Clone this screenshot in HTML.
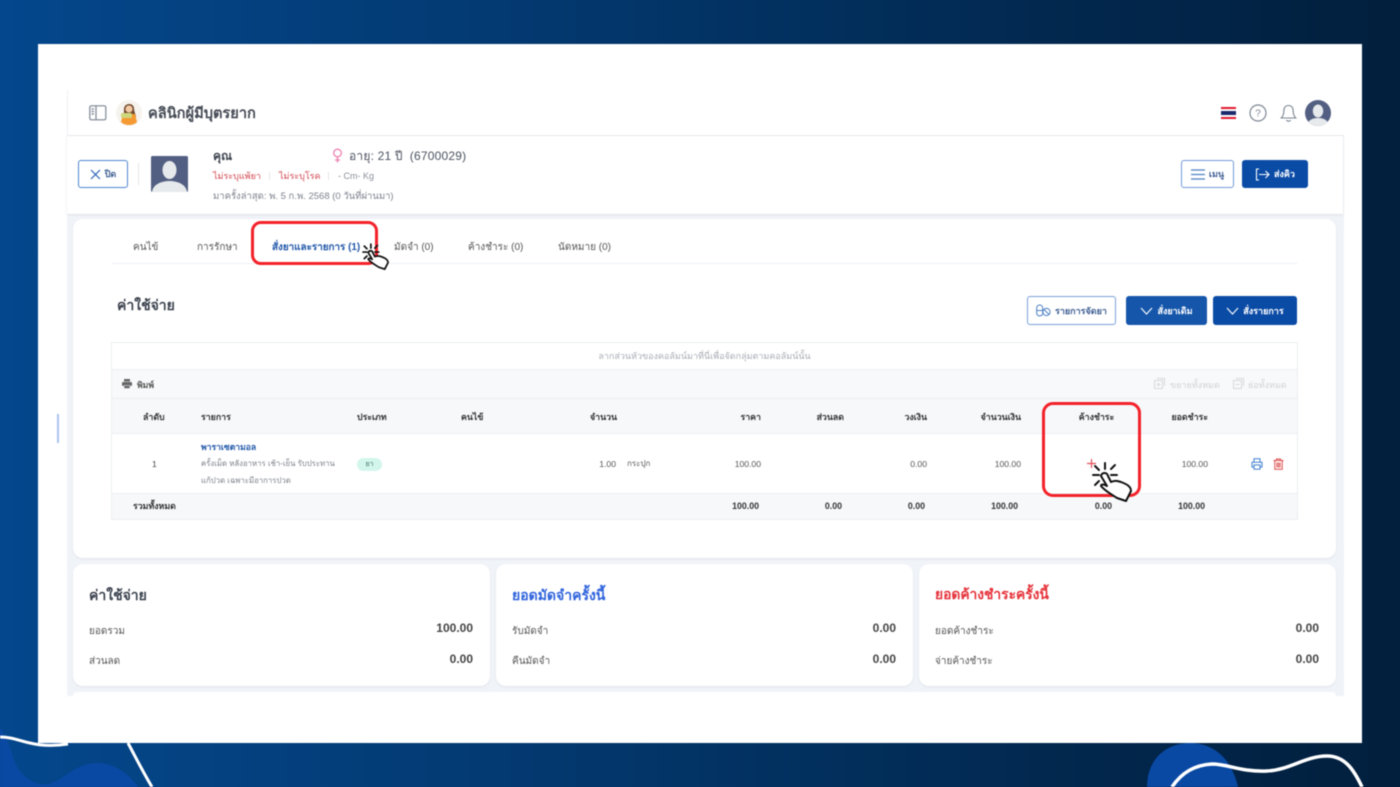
<!DOCTYPE html>
<html lang="th"><head><meta charset="utf-8"><title>คลินิกผู้มีบุตรยาก</title>
<style>
*{box-sizing:border-box}
html,body{margin:0;padding:0}
body{width:1400px;height:787px;overflow:hidden;position:relative;background:linear-gradient(90deg,#04478c 0%,#033a72 35%,#02284f 75%,#021f3d 100%);font-family:"Liberation Sans","Noto Sans CJK SC",sans-serif;color:#3c4350}
#w{position:absolute;left:0;top:0;width:1400px;height:787px;filter:blur(.4px)}
.a{position:absolute;white-space:nowrap}
.r{text-align:right}.c{text-align:center}
.th{font-size:8.8px;font-weight:700;color:#333;line-height:12px}
.tab{font-size:10px;line-height:12px;color:#555}
.td{font-size:8.6px;color:#555;line-height:12px}
.tf{font-size:8.8px;font-weight:700;color:#333;line-height:12px}
.lb{font-size:10px;line-height:14px;color:#555}
.card{position:absolute;background:#fff;border-radius:10px;box-shadow:0 1px 2px #dfe3ea}
.btn{position:absolute;border-radius:3px;font-size:9px;font-weight:700;display:flex;align-items:center;justify-content:center;gap:4px}
.pri{background:#0a4ba6;color:#fff}
.out{background:#fff;border:1px solid #6f9ad6;color:#3f5f94}
</style></head><body><div id="w">
<svg class="a" style="left:0;top:0" width="1400" height="787" viewBox="0 0 1400 787">
<path d="M0 727C5 735 10 745 13 757C18 775 35 787 48 784C65 780 75 763 97 763C115 763 130 775 138 787H0Z" fill="#0a49a3"/>
<path d="M1147 787C1147 760 1165 743 1190 743C1215 743 1232 760 1238 787Z" fill="#0a49a3"/>
</svg>
<div class="a" style="left:38px;top:44px;width:1324px;height:699px;background:#fff"></div>
<svg class="a" style="left:0;top:0" width="1400" height="787" viewBox="0 0 1400 787">
<path d="M0 737C12 737 20 741 30 743C42 746 55 746 68 744" fill="none" stroke="#fff" stroke-width="3"/>
<path d="M128 743C136 758 143 772 152 787" fill="none" stroke="#fff" stroke-width="3"/>
<path d="M1172 787C1182 772 1195 765 1212 764C1228 764 1240 772 1267 771C1290 770 1305 756 1327 756C1345 756 1354 770 1362 787" fill="none" stroke="#fff" stroke-width="3.5"/>
</svg>
<div class="a" style="left:57px;top:414px;width:2px;height:29px;background:#a9c4ee"></div>

<!-- app area -->
<div class="a" style="left:67px;top:90px;width:1277px;height:606px;background:#f0f3f8"></div>
<div class="a" style="left:67px;top:90px;width:1277px;height:46px;background:#fff;border-bottom:1px solid #e6e8ec;border-left:1px solid #eef0f4"></div>
<div class="a" style="left:67px;top:136px;width:1276px;height:78px;background:#fff;box-shadow:0 1px 2px #dcdfe5"></div>

<!-- top bar -->
<svg class="a" style="left:89px;top:105px" width="18" height="16" viewBox="0 0 18 16" fill="none" stroke="#7d8794" stroke-width="1.2"><rect x=".8" y=".8" width="16" height="14" rx="1.5"/><path d="M7 1V15M2.5 4H5M2.5 6.5H5M2.5 9H5"/></svg>
<svg class="a" style="left:116px;top:100px" width="26" height="26" viewBox="0 0 26 26"><circle cx="13" cy="13" r="13" fill="#f6f3ee"/><path d="M8 9C8 3 17 2 18 8C18 12 20 15 20 17H7C8 14 8 12 8 9Z" fill="#70482c"/><circle cx="13" cy="9" r="3.6" fill="#f3c9a5"/><path d="M7 14H19L21 22C17 26 9 26 5 22Z" fill="#f59a32"/><rect x="5" y="13" width="11" height="5" rx="1.5" fill="#cfd77c"/></svg>
<div class="a" style="left:148px;top:105px;font-size:14.6px;font-weight:700;line-height:18px;color:#454b55">คลินิกผู้มีบุตรยาก</div>
<svg class="a" style="left:1221px;top:107px" width="15" height="12"><rect width="15" height="12" fill="#fff"/><rect width="15" height="2" fill="#e01b2f"/><rect y="10" width="15" height="2" fill="#e01b2f"/><rect y="4" width="15" height="4" fill="#1b2a6b"/></svg>
<svg class="a" style="left:1249px;top:104px" width="18" height="18" viewBox="0 0 18 18" fill="none" stroke="#7d8794" stroke-width="1.2"><circle cx="9" cy="9" r="8"/><text x="9" y="12.6" font-size="10" fill="#7d8794" stroke="none" text-anchor="middle" font-family="Liberation Sans">?</text></svg>
<svg class="a" style="left:1280px;top:104px" width="17" height="19" viewBox="0 0 17 19" fill="none" stroke="#7d8794" stroke-width="1.1"><path d="M8.5 1.5C5 1.5 3.8 4 3.8 7.5C3.8 11 2.6 12.5 1.2 14H15.8C14.4 12.5 13.2 11 13.2 7.5C13.2 4 12 1.5 8.5 1.5Z"/><path d="M6.5 16C7 17.6 10 17.6 10.5 16"/></svg>
<svg class="a" style="left:1305px;top:100px" width="26" height="26" viewBox="0 0 26 26"><defs><clipPath id="cav"><circle cx="13" cy="13" r="13"/></clipPath></defs><g clip-path="url(#cav)"><rect width="26" height="26" fill="#525f82"/><ellipse cx="13" cy="11" rx="5.2" ry="6.5" fill="#e7eaec"/><path d="M2 26C3 19 9 18 13 18C17 18 23 19 24 26Z" fill="#e7eaec"/></g></svg>

<!-- patient -->
<div class="btn" style="left:78px;top:160px;width:50px;height:28px;background:#fff;border:1px solid #4d86cf;color:#3f5f94;font-size:9px"><svg width="11" height="11" viewBox="0 0 11 11" stroke="#2c64b8" stroke-width="1.2"><path d="M1 1L10 10M10 1L1 10"/></svg>ปิด</div>
<div class="a" style="left:138px;top:163px;width:1px;height:22px;background:#e4e6ea"></div>
<svg class="a" style="left:151px;top:156px" width="37" height="36" viewBox="0 0 37 36"><rect width="37" height="36" rx="1.5" fill="#525f82"/><ellipse cx="18.5" cy="14" rx="7" ry="9" fill="#e7eaec"/><path d="M1 36C2 28 11 25 18.5 25C26 25 35 28 36 36Z" fill="#e7eaec"/></svg>
<div class="a" style="left:213px;top:149px;font-size:12px;font-weight:700;line-height:15px;color:#3b424e">คุณ</div>
<svg class="a" style="left:332px;top:148px" width="11" height="15" viewBox="0 0 11 15" fill="none" stroke="#ee7fb0" stroke-width="1.3"><circle cx="5.5" cy="5" r="3.8"/><path d="M5.5 9V14.5M3 12H8"/></svg>
<div class="a" style="left:349px;top:148px;font-size:12px;line-height:16px;color:#4b5260;letter-spacing:.2px">อายุ: 21 ปี&nbsp; (6700029)</div>
<div class="a" style="left:213px;top:170px;font-size:9px;line-height:12px;color:#d2474f">ไม่ระบุแพ้ยา</div>
<div class="a" style="left:269px;top:172px;width:1px;height:8px;background:#e3e5ea"></div>
<div class="a" style="left:279px;top:170px;font-size:9px;line-height:12px;color:#d2474f">ไม่ระบุโรค</div>
<div class="a" style="left:328px;top:172px;width:1px;height:8px;background:#e3e5ea"></div>
<div class="a" style="left:338px;top:170px;font-size:9px;line-height:12px;color:#8a909b">- Cm- Kg</div>
<div class="a" style="left:213px;top:191px;font-size:9.5px;line-height:12px;color:#7c828d">มาครั้งล่าสุด: พ. 5 ก.พ. 2568 (0 วันที่ผ่านมา)</div>
<div class="btn out" style="left:1181px;top:160px;width:53px;height:28px"><svg width="14" height="11" viewBox="0 0 14 11" stroke="#4d7fc4" stroke-width="1.2"><path d="M0 1H14M0 5.5H14M0 10H14"/></svg>เมนู</div>
<div class="btn pri" style="left:1242px;top:160px;width:66px;height:28px"><svg width="15" height="13" viewBox="0 0 15 13" fill="none" stroke="#fff" stroke-width="1.1"><path d="M4 1H1.5V12H4M4 6.5H14M10.5 3L14 6.5L10.5 10"/></svg>ส่งคิว</div>

<!-- main card -->
<div class="card" style="left:73px;top:219px;width:1263px;height:339px"></div>
<div class="a tab" style="left:133px;top:241.5px">คนไข้</div>
<div class="a tab" style="left:197px;top:241.5px">การรักษา</div>
<div class="a tab" style="left:272px;top:241.5px;font-weight:700;color:#1f56a8;font-size:9.9px">สั่งยาและรายการ (1)</div>
<div class="a tab" style="left:394px;top:241.5px">มัดจำ (0)</div>
<div class="a tab" style="left:468px;top:241.5px">ค้างชำระ (0)</div>
<div class="a tab" style="left:558px;top:241.5px">นัดหมาย (0)</div>
<div class="a" style="left:112px;top:263px;width:1185px;height:1px;background:#edf0f5"></div>

<div class="a" style="left:117px;top:296px;font-size:14px;font-weight:700;line-height:18px;color:#3b424e">ค่าใช้จ่าย</div>
<div class="btn" style="left:1027px;top:296px;width:89px;height:29px;background:#fff;border:1px solid #79a0d8;color:#3f5f94;border-radius:3px"><svg width="15" height="13" viewBox="0 0 15 13" fill="none" stroke="#4d7fc4" stroke-width="1"><rect x=".7" y="1" width="6" height="11" rx="3"/><path d="M.7 6.5H6.7"/><circle cx="10.5" cy="8" r="3.6"/><path d="M8 5.5L13 10.5"/></svg>รายการจัดยา</div>
<div class="btn" style="left:1126px;top:296px;width:81px;height:29px;background:#1556ab;color:#fff"><svg width="13" height="8" viewBox="0 0 13 8" fill="none" stroke="#fff" stroke-width="1.1"><path d="M1 1L6.5 7L12 1"/></svg>สั่งยาเดิม</div>
<div class="btn pri" style="left:1213px;top:296px;width:84px;height:29px"><svg width="13" height="8" viewBox="0 0 13 8" fill="none" stroke="#fff" stroke-width="1.1"><path d="M1 1L6.5 7L12 1"/></svg>สั่งรายการ</div>

<!-- table -->
<div class="a" style="left:111px;top:342px;width:1187px;height:178px;border:1px solid #eceef2;background:#fff"></div>
<div class="a c" style="left:112px;top:350px;width:1185px;font-size:9px;line-height:12px;color:#a6abb3">ลากส่วนหัวของคอลัมน์มาที่นี่เพื่อจัดกลุ่มตามคอลัมน์นั้น</div>
<div class="a" style="left:112px;top:369px;width:1185px;height:30px;background:#f8f9fa;border-top:1px solid #eceef2;border-bottom:1px solid #eceef2"></div>
<svg class="a" style="left:122px;top:379px" width="10" height="10" viewBox="0 0 10 10" fill="#666"><rect x="2" y="0" width="6" height="2.5"/><rect x="0" y="3" width="10" height="4" rx="1"/><rect x="2" y="6.5" width="6" height="3" fill="#666" stroke="#fff" stroke-width=".5"/></svg>
<div class="a td" style="left:137px;top:378.5px;font-weight:700;color:#555">พิมพ์</div>
<svg class="a" style="left:1154px;top:378px" width="11" height="11" viewBox="0 0 11 11" fill="none" stroke="#d6d8dc"><rect x=".5" y="2.5" width="8" height="8"/><path d="M3 .5H10.5V8M2.5 6.5H6.5M4.5 4.5V8.5"/></svg>
<div class="a td" style="left:1170px;top:378.5px;color:#cfd2d6;font-size:9px">ขยายทั้งหมด</div>
<svg class="a" style="left:1233px;top:378px" width="11" height="11" viewBox="0 0 11 11" fill="none" stroke="#d6d8dc"><rect x=".5" y="2.5" width="8" height="8"/><path d="M3 .5H10.5V8M2.5 6.5H6.5"/></svg>
<div class="a td" style="left:1248px;top:378.5px;color:#cfd2d6;font-size:9px">ย่อทั้งหมด</div>
<div class="a" style="left:112px;top:399px;width:1185px;height:35px;background:#f7f8fa;border-bottom:1px solid #eceef2"></div>
<div class="a th" style="left:143px;top:410.5px">ลำดับ</div>
<div class="a th" style="left:201px;top:410.5px">รายการ</div>
<div class="a th" style="left:357px;top:410.5px">ประเภท</div>
<div class="a th" style="left:461px;top:410.5px">คนไข้</div>
<div class="a th" style="left:590px;top:410.5px">จำนวน</div>
<div class="a th r" style="left:700px;top:410.5px;width:61px">ราคา</div>
<div class="a th r" style="left:784px;top:410.5px;width:60px">ส่วนลด</div>
<div class="a th r" style="left:868px;top:410.5px;width:59px">วงเงิน</div>
<div class="a th r" style="left:960px;top:410.5px;width:61px">จำนวนเงิน</div>
<div class="a th c" style="left:1060px;top:410.5px;width:73px">ค้างชำระ</div>
<div class="a th r" style="left:1147px;top:410.5px;width:61px">ยอดชำระ</div>

<div class="a td" style="left:152px;top:458px;color:#444">1</div>
<div class="a td" style="left:201px;top:441px;font-weight:700;color:#1f56a8">พาราเซตามอล</div>
<div class="a td" style="left:201px;top:458px;color:#7b808a;font-size:7.8px">ครั้งเม็ด หลังอาหาร เช้า-เย็น รับประทาน</div>
<div class="a td" style="left:201px;top:475px;color:#7b808a;font-size:7.8px">แก้ปวด เฉพาะมีอาการปวด</div>
<div class="a c" style="left:357px;top:458px;width:25px;height:13px;border-radius:7px;background:#d3f6ec;font-size:7px;line-height:13px;color:#3f6b62">ยา</div>
<div class="a td r" style="left:566px;top:458px;width:50px;color:#555">1.00</div>
<div class="a td" style="left:627px;top:458px;color:#555;font-size:8px">กระปุก</div>
<div class="a td r" style="left:700px;top:458px;width:61px">100.00</div>
<div class="a td r" style="left:868px;top:458px;width:59px">0.00</div>
<div class="a td r" style="left:960px;top:458px;width:61px">100.00</div>
<div class="a td r" style="left:1147px;top:458px;width:61px">100.00</div>
<svg class="a" style="left:1251px;top:458px" width="12" height="12" viewBox="0 0 12 12" fill="none" stroke="#3f7fcf" stroke-width="1"><path d="M3 4V.8H9V4M3 9H1V4.2H11V9H9"/><rect x="3" y="7" width="6" height="4.2"/></svg>
<svg class="a" style="left:1273px;top:458px" width="11" height="12" viewBox="0 0 11 12" fill="none" stroke="#dd4b4b" stroke-width="1"><path d="M.5 2.5H10.5M3.5 2.5V1H7.5V2.5M1.8 2.5V11.2H9.2V2.5M4 4.5V9.5M5.5 4.5V9.5M7 4.5V9.5"/></svg>

<div class="a" style="left:112px;top:493px;width:1185px;height:26px;background:#f7f8fa;border-top:1px solid #eceef2"></div>
<div class="a tf" style="left:133px;top:500px">รวมทั้งหมด</div>
<div class="a tf r" style="left:700px;top:500px;width:59px">100.00</div>
<div class="a tf r" style="left:784px;top:500px;width:58px">0.00</div>
<div class="a tf r" style="left:868px;top:500px;width:57px">0.00</div>
<div class="a tf r" style="left:960px;top:500px;width:58px">100.00</div>
<div class="a tf r" style="left:1052px;top:500px;width:60px">0.00</div>
<div class="a tf r" style="left:1145px;top:500px;width:60px">100.00</div>

<!-- summary cards -->
<div class="card" style="left:73px;top:564px;width:417px;height:122px"></div>
<div class="card" style="left:496px;top:564px;width:417px;height:122px"></div>
<div class="card" style="left:919px;top:564px;width:417px;height:122px"></div>
<div class="a" style="left:73px;top:692px;width:1263px;height:4px;background:#fff;border-radius:6px 6px 0 0"></div>

<div class="a" style="left:89px;top:586px;font-size:14px;font-weight:700;line-height:18px;color:#3b424e">ค่าใช้จ่าย</div>
<div class="a lb" style="left:89px;top:624.5px">ยอดรวม</div>
<div class="a lb" style="left:89px;top:655px">ส่วนลด</div>
<div class="a r" style="left:393px;top:621px;width:80px;font-size:12px;font-weight:700;line-height:15px;color:#444">100.00</div>
<div class="a r" style="left:393px;top:652px;width:80px;font-size:12px;font-weight:700;line-height:15px;color:#444">0.00</div>

<div class="a" style="left:512px;top:586px;font-size:14px;font-weight:700;line-height:18px;color:#2f63dc">ยอดมัดจำครั้งนี้</div>
<div class="a lb" style="left:512px;top:624.5px">รับมัดจำ</div>
<div class="a lb" style="left:512px;top:655px">คืนมัดจำ</div>
<div class="a r" style="left:816px;top:621px;width:80px;font-size:12px;font-weight:700;line-height:15px;color:#444">0.00</div>
<div class="a r" style="left:816px;top:652px;width:80px;font-size:12px;font-weight:700;line-height:15px;color:#444">0.00</div>

<div class="a" style="left:935px;top:586px;font-size:13.8px;font-weight:700;line-height:18px;color:#e5323a">ยอดค้างชำระครั้งนี้</div>
<div class="a lb" style="left:935px;top:624.5px">ยอดค้างชำระ</div>
<div class="a lb" style="left:935px;top:655px">จ่ายค้างชำระ</div>
<div class="a r" style="left:1239px;top:621px;width:80px;font-size:12px;font-weight:700;line-height:15px;color:#444">0.00</div>
<div class="a r" style="left:1239px;top:652px;width:80px;font-size:12px;font-weight:700;line-height:15px;color:#444">0.00</div>

<!-- annotations -->
<div class="a" style="left:251px;top:221px;width:127px;height:44px;border:3px solid #f3222a;border-radius:10px"></div>
<div class="a" style="left:1042px;top:402px;width:99px;height:95px;border:3px solid #f3222a;border-radius:11px"></div>

<svg class="a" style="left:1090px;top:460px" width="44" height="42" viewBox="0 0 44 42" fill="none" stroke="#111" stroke-width="2" stroke-linecap="round" stroke-linejoin="round">
<path d="M15 3V9M5 6L9 10M25 5L21 9M3 15H9M21 15H27M5 25L9 21"/>
<path d="M11 16C12 12 17 12 18 16L21 22C25 20 28 21 31 22C36 24 41 26 41 31L36 41L27 38C21 34 15 31 11 26C11 24 14 24 17 26L11 16Z" fill="#fff"/>
</svg>
<svg class="a" style="left:1087px;top:459px" width="9" height="9" viewBox="0 0 9 9" stroke="#e0505c" stroke-width="1.2"><path d="M4.5 0V9M0 4.5H9"/></svg>
<svg class="a" style="left:361px;top:241px" width="29" height="30" viewBox="0 0 44 42" fill="none" stroke="#111" stroke-width="2.6" stroke-linecap="round" stroke-linejoin="round">
<path d="M15 3V9M5 6L9 10M25 5L21 9M3 15H9M21 15H27M5 25L9 21"/>
<path d="M11 16C12 12 17 12 18 16L21 22C25 20 28 21 31 22C36 24 41 26 41 31L36 41L27 38C21 34 15 31 11 26C11 24 14 24 17 26L11 16Z" fill="#fff"/>
</svg>
</div></body></html>
